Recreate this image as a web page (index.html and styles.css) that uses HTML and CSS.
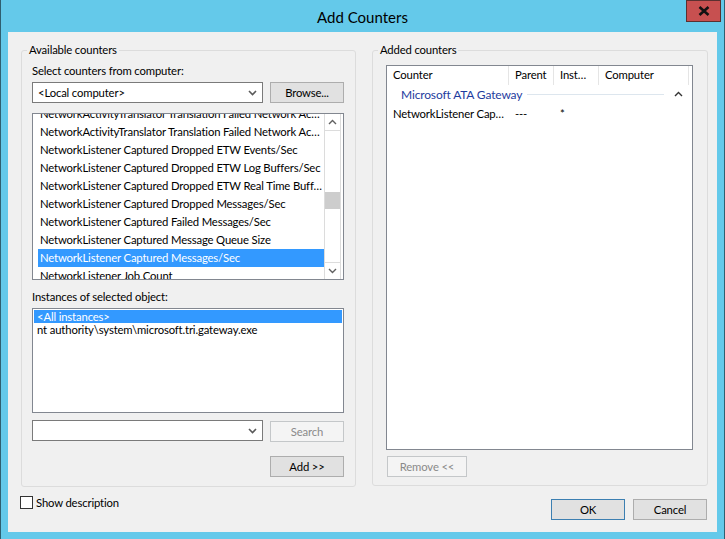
FILE: index.html
```html
<!DOCTYPE html>
<html>
<head>
<meta charset="utf-8">
<title>Add Counters</title>
<link rel="stylesheet" href="styles.css">
</head>
<body>
<div class="window">
  <div class="titlebar">
    <span class="title">Add Counters</span>
  </div>
  <button class="close" aria-label="Close">
    <svg width="12" height="10" viewBox="0 0 12 10"><path d="M1.5 1 L10.5 9 M10.5 1 L1.5 9" stroke="#111" stroke-width="2.6" fill="none"/></svg>
  </button>
  <div class="client">
    <div class="groups">
      <section class="group group-left">
        <span class="legend">Available counters</span>
        <div class="lbl lbl-first">Select counters from computer:</div>
        <div class="row row-computer">
          <div class="combo"><span class="combo-text">&lt;Local computer&gt;</span><svg class="chev" width="9" height="6" viewBox="0 0 9 6"><path d="M1 1 L4.5 4.5 L8 1" stroke="#5a5a5a" stroke-width="1.6" fill="none"/></svg></div>
          <button class="btn">Browse...</button>
        </div>
        <div class="listbox counters">
          <div class="items">
            <ul class="rows">
              <li>NetworkActivityTranslator Translation Failed Network Ac…</li>
              <li>NetworkActivityTranslator Translation Failed Network Ac…</li>
              <li>NetworkListener Captured Dropped ETW Events/Sec</li>
              <li>NetworkListener Captured Dropped ETW Log Buffers/Sec</li>
              <li>NetworkListener Captured Dropped ETW Real Time Buff…</li>
              <li>NetworkListener Captured Dropped Messages/Sec</li>
              <li>NetworkListener Captured Failed Messages/Sec</li>
              <li>NetworkListener Captured Message Queue Size</li>
              <li class="sel">NetworkListener Captured Messages/Sec</li>
              <li>NetworkListener Job Count</li>
            </ul>
          </div>
          <div class="scrollbar">
            <div class="sb-btn"><svg width="9" height="6" viewBox="0 0 9 6"><path d="M1 5 L4.5 1.5 L8 5" stroke="#606060" stroke-width="1.4" fill="none"/></svg></div>
            <div class="sb-track"><div class="sb-thumb"></div></div>
            <div class="sb-btn sb-btn-down"><svg width="9" height="6" viewBox="0 0 9 6"><path d="M1 1 L4.5 4.5 L8 1" stroke="#606060" stroke-width="1.4" fill="none"/></svg></div>
          </div>
        </div>
        <div class="lbl lbl-inst">Instances of selected object:</div>
        <div class="listbox instances">
          <ul class="inst-rows">
            <li class="sel">&lt;All instances&gt;</li>
            <li>nt authority\system\microsoft.tri.gateway.exe</li>
          </ul>
        </div>
        <div class="row row-search">
          <div class="combo"><span class="combo-text"></span><svg class="chev" width="9" height="6" viewBox="0 0 9 6"><path d="M1 1 L4.5 4.5 L8 1" stroke="#5a5a5a" stroke-width="1.6" fill="none"/></svg></div>
          <button class="btn btn-search" disabled>Search</button>
        </div>
        <div class="row row-add">
          <button class="btn">Add &gt;&gt;</button>
        </div>
      </section>
      <section class="group group-right">
        <span class="legend">Added counters</span>
        <div class="listview">
          <div class="lv-header">
            <div class="col c1">Counter</div>
            <div class="col c2">Parent</div>
            <div class="col c3">Inst…</div>
            <div class="col c4">Computer</div>
          </div>
          <div class="lv-group">
            <span class="lv-group-name">Microsoft ATA Gateway</span>
            <span class="lv-group-line"></span>
            <svg class="lv-group-chev" width="9" height="6" viewBox="0 0 9 6"><path d="M1 5 L4.5 1.5 L8 5" stroke="#333" stroke-width="1.4" fill="none"/></svg>
          </div>
          <div class="lv-row">
            <div class="cell c1">NetworkListener Cap…</div>
            <div class="cell c2">---</div>
            <div class="cell c3">*</div>
            <div class="cell c4"></div>
          </div>
        </div>
        <button class="btn btn-remove" disabled>Remove &lt;&lt;</button>
      </section>
    </div>
    <div class="footer">
      <label class="check"><span class="box"></span><span>Show description</span></label>
      <div class="actions">
        <button class="btn btn-default">OK</button>
        <button class="btn">Cancel</button>
      </div>
    </div>
  </div>
</div>
</body>
</html>
```
FILE: styles.css
```css
* { box-sizing: border-box; }
html, body { margin: 0; padding: 0; }
body {
  width: 725px;
  height: 539px;
  overflow: hidden;
  background: #ffffff;
  font-family: "Lato", "Noto Sans", sans-serif;
  font-size: 11.3px;
  letter-spacing: -0.15px;
  color: #000;
}
.window {
  position: relative;
  width: 725px;
  height: 539px;
  background: #64c9ea;
  border-left: 1px solid #2f5f70;
  border-right: 1px solid #2f5f70;
  padding: 0 7px 7px 7px;
  display: flex;
  flex-direction: column;
}
.titlebar {
  height: 32px;
  display: flex;
  justify-content: center;
  padding-top: 7px;
}
.title {
  font-size: 15px;
  letter-spacing: 0;
  line-height: 20px;
  color: #000;
}
.close {
  position: absolute;
  left: 685px;
  top: 0;
  width: 35px;
  height: 22px;
  background: #c75050;
  border: 1px solid #5b3030;
  padding: 0;
  display: flex;
  align-items: center;
  justify-content: center;
}
.client {
  height: 500px;
  background: #f0f0f0;
  padding: 18px 0 0 13px;
  display: flex;
  flex-direction: column;
}
.groups {
  display: flex;
  gap: 16px;
  align-items: flex-start;
}
.group {
  position: relative;
  border: 1px solid #dcdcdc;
  border-radius: 3px;
  display: flex;
  flex-direction: column;
}
.legend {
  position: absolute;
  top: -9px;
  left: 5px;
  padding: 0 2px;
  background: #f0f0f0;
  line-height: 16px;
}
.group-left {
  width: 335px;
  height: 437px;
  padding: 0 10px;
}
.group-right {
  width: 336px;
  height: 436px;
  padding: 0 0 0 13px;
}
.lbl {
  height: 15px;
  line-height: 15px;
  white-space: nowrap;
}
.lbl-first { margin-top: 12px; }
.lbl-inst { margin-top: 9px; }
.row {
  display: flex;
  gap: 7px;
  align-items: flex-start;
  height: 22px;
}
.row-computer { margin-top: 4px; }
.row-search { margin-top: 7px; }
.row-add { margin-top: 14px; justify-content: flex-end; padding-right: 1px; }
.combo {
  width: 231px;
  height: 21px;
  background: #fff;
  border: 1px solid #7a7a7a;
  display: flex;
  align-items: center;
  padding: 0 5px 0 5px;
}
.combo-text { flex: 1; white-space: nowrap; }
.chev { display: block; }
.btn {
  font-family: inherit;
  font-size: 11.3px;
  letter-spacing: -0.15px;
  width: 74px;
  height: 21px;
  padding: 0;
  background: #e1e1e1;
  border: 1px solid #adadad;
  color: #000;
  line-height: 19px;
  text-align: center;
}
.btn:disabled {
  background: #f4f4f4;
  border-color: #c4c7c9;
  color: #8a8a8a;
}
.btn-search { margin-top: 1px; }
.listbox {
  width: 312px;
  background: #fff;
  border: 1px solid #828790;
}
.counters {
  margin-top: 9px;
  height: 167px;
  display: flex;
}
.items {
  flex: 1;
  min-width: 0;
  overflow: hidden;
  padding-left: 5px;
}
.rows {
  list-style: none;
  margin: -9px 0 0 0;
  padding: 0;
}
.rows li {
  height: 18px;
  line-height: 18px;
  padding: 0 2px;
  white-space: nowrap;
  overflow: hidden;
  text-overflow: ellipsis;
}
.sel {
  background: #3399ff;
  color: #fff;
}
.scrollbar {
  width: 17px;
  flex: none;
  margin-right: 2px;
  border-left: 1px solid #dcdcdc;
  border-right: 1px solid #dcdcdc;
  display: flex;
  flex-direction: column;
  background: #fff;
}
.sb-btn {
  height: 17px;
  border-bottom: 1px solid #dcdcdc;
  display: flex;
  align-items: center;
  justify-content: center;
}
.sb-btn-down {
  border-bottom: none;
  border-top: 1px solid #dcdcdc;
}
.sb-track {
  flex: 1;
  padding-top: 61px;
}
.sb-thumb {
  height: 17px;
  background: #cdcdcd;
}
.instances {
  margin-top: 4px;
  height: 105px;
  padding: 1px;
}
.inst-rows {
  list-style: none;
  margin: 0;
  padding: 0;
}
.inst-rows li {
  height: 13px;
  line-height: 13px;
  padding-left: 3px;
  white-space: nowrap;
}
.listview {
  margin-top: 14px;
  width: 307px;
  height: 385px;
  background: #fff;
  border: 1px solid #828790;
}
.lv-header {
  display: flex;
  height: 19px;
}
.col, .cell {
  padding-left: 6px;
  white-space: nowrap;
  overflow: hidden;
}
.col {
  line-height: 18px;
  border-right: 1px solid #e5e5e5;
}
.c1 { width: 122px; }
.c2 { width: 45px; }
.c3 { width: 45px; }
.c4 { width: 90px; }
.lv-group {
  height: 18px;
  display: flex;
  align-items: center;
  padding: 0 9px 0 14px;
}
.lv-group-name {
  color: #1e3c9e;
  font-size: 12px;
  white-space: nowrap;
}
.lv-group-line {
  flex: 1;
  height: 1px;
  background: #dde6ee;
  margin: 0 10px 0 5px;
}
.lv-row {
  display: flex;
  height: 18px;
  line-height: 18px;
  margin-top: 2px;
}
.btn-remove {
  width: 80px;
  margin: 6px 0 0 1px;
}
.footer {
  display: flex;
  justify-content: space-between;
  align-items: flex-start;
  margin-top: 9px;
  padding-right: 10px;
}
.check {
  display: flex;
  align-items: center;
  gap: 3px;
  margin-left: -1px;
  line-height: 13px;
}
.box {
  width: 13px;
  height: 13px;
  background: #fff;
  border: 1px solid #333;
}
.actions {
  display: flex;
  gap: 8px;
  margin-top: 3px;
}
.btn-default {
  border-color: #3c7fb1;
}
```
